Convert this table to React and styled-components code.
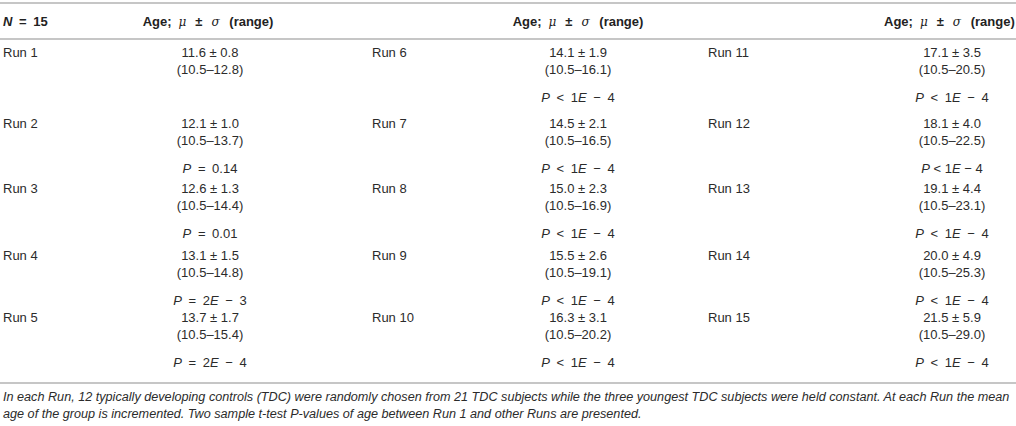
import React from "react";
import styled, { createGlobalStyle } from "styled-components";

const GlobalStyle = createGlobalStyle`
  html, body { margin: 0; padding: 0; background: #fff; }
  body {
    font-family: "Liberation Sans", Arial, Helvetica, sans-serif;
    color: #2b2b2b;
  }
`;

const COLS = "56px 308px 92px 244px 184px 132px";

const Wrapper = styled.div`
  width: 1016px;
  padding-top: 2px;
`;

const Table = styled.div`
  border-top: 2px solid #c6c6c6;
  border-bottom: 2px solid #c6c6c6;
`;

const HeaderRow = styled.div`
  display: grid;
  grid-template-columns: ${COLS};
  height: 34px;
  align-items: center;
  border-bottom: 2px solid #c6c6c6;
  font-size: 13px;
  font-weight: bold;
  color: #222;
`;

const HeadCell = styled.div`
  text-align: ${(p) => (p.$center ? "center" : "left")};
  padding-left: ${(p) => p.$pad || 0}px;
  padding-right: ${(p) => p.$padR || 0}px;
  white-space: nowrap;
  word-spacing: ${(p) => p.$ws || 0}px;
`;

const Body = styled.div`
  padding-bottom: 11px;
`;

const Row = styled.div`
  display: grid;
  grid-template-columns: ${COLS};
  padding-top: ${(p) => p.$top}px;
  font-size: 13px;
  color: #2b2b2b;
`;

const Label = styled.div`
  padding-left: ${(p) => p.$pad}px;
  line-height: 17px;
  white-space: nowrap;
`;

const ValueCell = styled.div`
  display: flex;
  flex-direction: column;
  align-items: center;
  white-space: nowrap;
  padding-left: ${(p) => p.$shift || 0}px;
`;

const Line = styled.div`
  line-height: 17px;
  height: 17px;
`;

const PLine = styled.div`
  line-height: 17px;
  height: 17px;
  margin-top: 11px;
  word-spacing: ${(p) => (p.$tight ? "0" : "3px")};
`;

const It = styled.i`
  font-style: italic;
`;

const Greek = styled.i`
  font-family: "DejaVu Serif", "Liberation Serif", serif;
  font-style: italic;
  font-weight: normal;
  font-size: 12px;
  margin: 0 ${(p) => p.$r || 0}px 0 ${(p) => p.$l || 0}px;
`;

const Note = styled.p`
  margin: 5px 0 0;
  padding-left: 3px;
  width: 1012px;
  font-size: 12.65px;
  line-height: 17px;
  font-style: italic;
  color: #2b2b2b;
`;

const runs = [
  ["11.6 ± 0.8", "(10.5–12.8)", null],
  ["12.1 ± 1.0", "(10.5–13.7)", { op: "=", v: "0.14" }],
  ["12.6 ± 1.3", "(10.5–14.4)", { op: "=", v: "0.01" }],
  ["13.1 ± 1.5", "(10.5–14.8)", { op: "=", e: "2", x: "3" }],
  ["13.7 ± 1.7", "(10.5–15.4)", { op: "=", e: "2", x: "4" }],
  ["14.1 ± 1.9", "(10.5–16.1)", { op: "<", e: "1", x: "4" }],
  ["14.5 ± 2.1", "(10.5–16.5)", { op: "<", e: "1", x: "4" }],
  ["15.0 ± 2.3", "(10.5–16.9)", { op: "<", e: "1", x: "4" }],
  ["15.5 ± 2.6", "(10.5–19.1)", { op: "<", e: "1", x: "4" }],
  ["16.3 ± 3.1", "(10.5–20.2)", { op: "<", e: "1", x: "4" }],
  ["17.1 ± 3.5", "(10.5–20.5)", { op: "<", e: "1", x: "4" }],
  ["18.1 ± 4.0", "(10.5–22.5)", { op: "<", e: "1", x: "4", tight: true }],
  ["19.1 ± 4.4", "(10.5–23.1)", { op: "<", e: "1", x: "4" }],
  ["20.0 ± 4.9", "(10.5–25.3)", { op: "<", e: "1", x: "4" }],
  ["21.5 ± 5.9", "(10.5–29.0)", { op: "<", e: "1", x: "4" }],
];

const rowTops = [4, 9, 3, 5, 0];

function PValue({ p }) {
  if (!p) return <PLine />;
  return (
    <PLine $tight={p.tight}>
      <It>P</It> {p.op}{" "}
      {p.v ? (
        p.v
      ) : (
        <>
          {p.e}
          <It>E</It> − {p.x}
        </>
      )}
    </PLine>
  );
}

function Run({ idx, pad, shift }) {
  const [val, range, p] = runs[idx];
  return (
    <>
      <Label $pad={pad}>Run {idx + 1}</Label>
      <ValueCell $shift={shift}>
        <Line>{val}</Line>
        <Line>{range}</Line>
        <PValue p={p} />
      </ValueCell>
    </>
  );
}

function AgeHead({ padR }) {
  return (
    <HeadCell $center $padR={padR}>
      Age;<Greek $l={7} $r={9}>μ</Greek>±<Greek $l={9} $r={6}>σ</Greek> (range)
    </HeadCell>
  );
}

export default function App() {
  return (
    <Wrapper>
      <GlobalStyle />
      <Table>
        <HeaderRow>
          <HeadCell $pad={3} $ws={3}>
            <It>N</It> = 15
          </HeadCell>
          <AgeHead padR={4} />
          <HeadCell />
          <AgeHead />
          <HeadCell />
          <AgeHead padR={10} />
        </HeaderRow>
        <Body>
          {rowTops.map((top, i) => (
            <Row key={i} $top={top}>
              <Run idx={i} pad={3} />
              <Run idx={i + 5} pad={8} />
              <Run idx={i + 10} pad={8} shift={4} />
            </Row>
          ))}
        </Body>
      </Table>
      <Note>
        In each Run, 12 typically developing controls (TDC) were randomly chosen
        from 21 TDC subjects while the three youngest TDC subjects were held
        constant. At each Run the mean age of the group is incremented. Two
        sample t-test P-values of age between Run 1 and other Runs are
        presented.
      </Note>
    </Wrapper>
  );
}
